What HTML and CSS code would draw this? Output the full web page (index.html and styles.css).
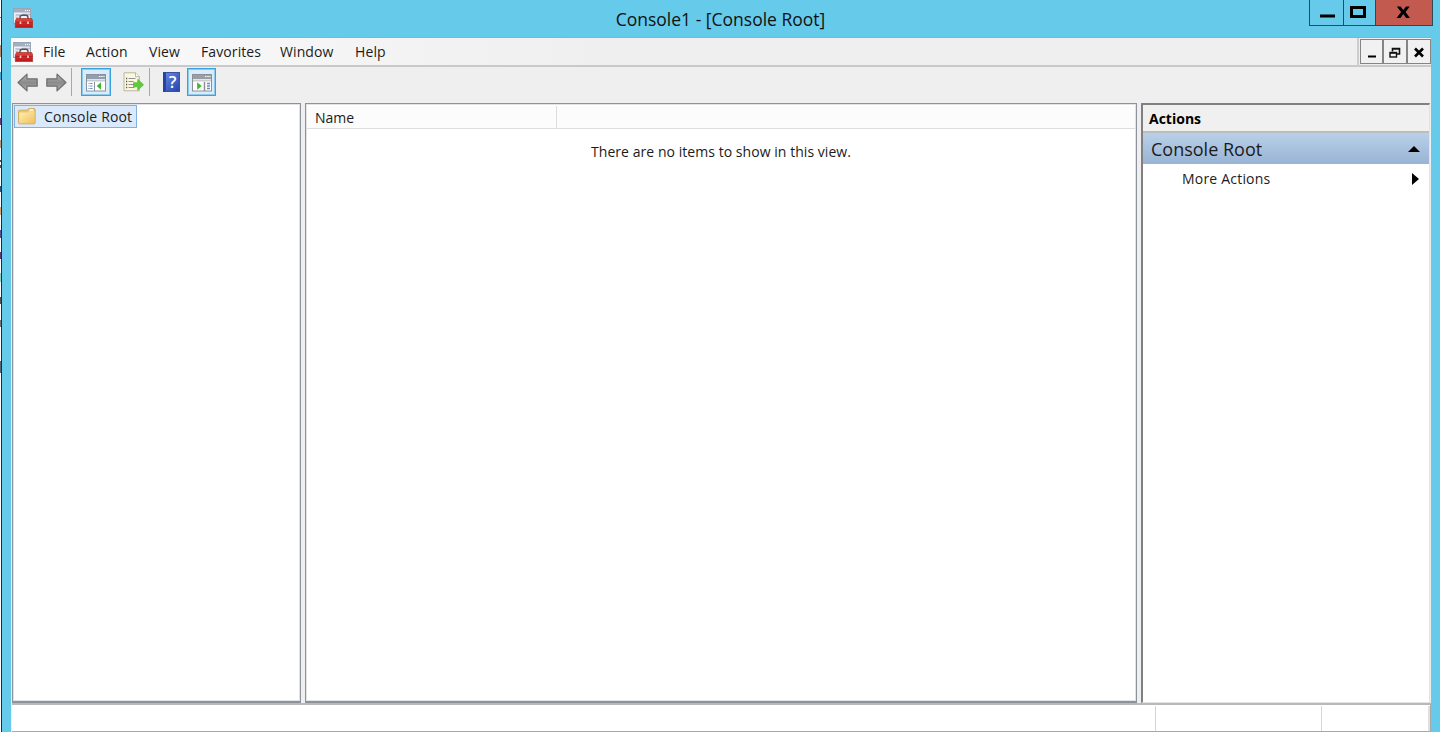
FILE: index.html
```html
<!DOCTYPE html>
<html lang="en">
<head>
    <meta charset="UTF-8">
    <meta name="viewport" content="width=device-width, initial-scale=1.0">
    <title>Console1 - [Console Root]</title>
    <link rel="stylesheet" href="styles.css">
</head>
<body>
    <svg class="defs" width="0" height="0">
        <defs>
            <linearGradient id="arrow-fill" x1="0" y1="0" x2="0" y2="1">
                <stop offset="0" stop-color="#b4b4b4"/>
                <stop offset="0.5" stop-color="#8b8b8b"/>
                <stop offset="1" stop-color="#a9a9a9"/>
            </linearGradient>
            <linearGradient id="red-fill" x1="0" y1="0" x2="0" y2="1">
                <stop offset="0" stop-color="#e0493f"/>
                <stop offset="1" stop-color="#bb1418"/>
            </linearGradient>
            <linearGradient id="folder-fill" x1="0" y1="0" x2="1" y2="1">
                <stop offset="0" stop-color="#fff0b4"/>
                <stop offset="1" stop-color="#efc15c"/>
            </linearGradient>
            <symbol id="toolbox" viewBox="0 0 20 20">
                <rect x="0.5" y="0.5" width="17" height="15" fill="#eef1f5" stroke="#9aa5b5"/>
                <rect x="1" y="1" width="16" height="3.5" fill="#a3afc0"/>
                <path d="M12 2.5h1M14 2.5h1M16 2.5h1" stroke="#fff"/>
                <path d="M2.5 7h5M2.5 9.5h3M9 6.5h8" stroke="#b1bac8" stroke-width="1.5"/>
                <path d="M7 11v-1.5q0-2.2 2-2.2h4q2 0 2 2.2V11" fill="none" stroke="#555" stroke-width="1.4"/>
                <path d="M3.5 10.5h15.2l1 2.5v6.5H2.3V13z" fill="url(#red-fill)" stroke="#a5201e" stroke-width="0.6"/>
                <path d="M2.5 14.5h17" stroke="#b01818" stroke-width="0.7"/>
                <path d="M7.5 13.5v2.6M15 13.5v2.6" stroke="#e8d4d2" stroke-width="1.6"/>
            </symbol>
            <symbol id="arrow" viewBox="0 0 20 18">
                <path d="M1 9L9.500 1v4.500h9.700v7H9.500V17z" fill="url(#arrow-fill)" stroke="#707070" stroke-width="1.200" stroke-linejoin="round"/>
            </symbol>
        </defs>
    </svg>

    <div class="screen">
        <div class="behind"></div>
        <div class="window">
            <header class="titlebar">
                <svg class="app-icon" width="20" height="20"><use href="#toolbox"/></svg>
                <h1 class="title">Console1 - [Console Root]</h1>
                <div class="caption-buttons">
                    <button class="caption-btn minimize"><svg width="33" height="25"><path d="M10 16h15" stroke="#000" stroke-width="3"/></svg></button>
                    <button class="caption-btn maximize"><svg width="31" height="25"><rect x="7.500" y="7.500" width="13" height="9" fill="none" stroke="#000" stroke-width="3"/></svg></button>
                    <button class="caption-btn close"><svg width="56" height="25"><path d="M20.800 6.500h3.800l2.700 3.600 2.700-3.600h3.800l-4.300 5.500 4.500 6h-3.900L27.300 14.100 24.500 18h-3.900l4.500-6z"/></svg></button>
                </div>
            </header>

            <div class="client">
                <nav class="menubar">
                    <svg class="menu-icon" width="20" height="20"><use href="#toolbox"/></svg>
                    <ul class="menu">
                        <li class="m-file">File</li>
                        <li class="m-action">Action</li>
                        <li class="m-view">View</li>
                        <li class="m-favorites">Favorites</li>
                        <li class="m-window">Window</li>
                        <li class="m-help">Help</li>
                    </ul>
                    <div class="mdi-buttons">
                        <button class="mdi-btn"><svg width="22" height="22"><path d="M7 15.500h8" stroke="#000" stroke-width="2"/></svg></button>
                        <button class="mdi-btn"><svg width="22" height="22"><path d="M8.500 10.500V7.500h7v5.500h-2.500M8.500 8h7M6 12h7" fill="none" stroke="#111" stroke-width="1.600"/><rect x="6" y="11.500" width="6.500" height="4.500" fill="none" stroke="#111" stroke-width="1.400"/></svg></button>
                        <button class="mdi-btn"><svg width="22" height="22"><path d="M7 7.500l8 8M15 7.500l-8 8" stroke="#000" stroke-width="2.600"/></svg></button>
                    </div>
                </nav>

                <div class="toolbar">
                    <svg class="tool-arrow" width="21" height="19"><use href="#arrow"/></svg>
                    <svg class="tool-arrow forward" width="21" height="19"><use href="#arrow"/></svg>
                    <span class="separator"></span>
                    <button class="tool-btn active">
                        <svg width="20" height="18" viewBox="0 0 20 18">
                            <rect x="0.500" y="0.500" width="19" height="16.500" fill="#fff" stroke="#8792a2"/>
                            <rect x="1" y="1" width="18" height="4" fill="#929dae"/>
                            <path d="M13 2.500h1.500M15.300 2.500h1.500M17.500 2.500h1" stroke="#fff"/>
                            <path d="M1 6.500h18" stroke="#c3cad4" stroke-width="2"/>
                            <path d="M8.500 8v9" stroke="#8792a2"/>
                            <path d="M2.500 9.500h4M2.500 12h4M2.500 14.500h4" stroke="#628bc4" stroke-width="1.200" stroke-dasharray="1 .7 3"/>
                            <path d="M15 8.200v7.500L10.700 12z" fill="#3fb52c"/>
                        </svg>
                    </button>
                    <svg class="tool-export" width="22" height="20" viewBox="0 0 22 20">
                        <path d="M1 .8h11.500l3.800 3.700v14.300H1z" fill="#fbf8dc" stroke="#b9b69e"/>
                        <path d="M12.500.8v3.900h3.800" fill="#fff" stroke="#aaa78f" stroke-width=".8"/>
                        <path d="M3 6.500h1.200M3 9.500h1.200M3 12.500h1.200M3 15.500h1.200" stroke="#555" stroke-width="1.400"/>
                        <path d="M5.500 6.500h7M5.500 9.500h5M5.500 12.500h5M5.500 15.500h6" stroke="#9090a0"/>
                        <path d="M10.500 10.700h4.300V7.300l5.700 5.500-5.700 5.400v-3.400h-4.300z" fill="#5dcc38" stroke="#55ba3a" stroke-width=".8"/>
                    </svg>
                    <span class="separator second"></span>
                    <div class="tool-help">?</div>
                    <button class="tool-btn active actions-toggle">
                        <svg width="20" height="18" viewBox="0 0 20 18">
                            <rect x="0.500" y="0.500" width="19" height="16.500" fill="#fff" stroke="#8b8f96"/>
                            <rect x="1" y="1" width="18" height="4" fill="#999da5"/>
                            <path d="M13 2.500h1.500M15.300 2.500h1.500M17.500 2.500h1" stroke="#fff"/>
                            <path d="M1 6.500h18" stroke="#c9ccd1" stroke-width="2"/>
                            <path d="M12.500 8v9" stroke="#8b8f96" stroke-width="1.500"/>
                            <path d="M15 9.500h3M15 12h3M15 14.500h3" stroke="#628bc4" stroke-width="1.300"/>
                            <path d="M5.200 8.200v7.500L9.700 12z" fill="#3fb52c"/>
                        </svg>
                    </button>
                </div>

                <main class="panes">
                    <aside class="tree">
                        <div class="tree-item">
                            <svg width="18" height="17" viewBox="0 0 18 17">
                                <path d="M.6 3.200q0-1 1-1h7.600l1.400-1.600h5.500q1 0 1 1v13.200q0 1-1 1H1.600q-1 0-1-1z" fill="#eac66c" stroke="#d3aa58"/>
                                <path d="M11.500 2h4" stroke="#fff" stroke-width="1.500"/>
                                <path d="M1.200 4.500h8.300l1.500-1.200h5.500v12H1.200z" fill="url(#folder-fill)"/>
                            </svg>
                            <span class="tree-label">Console Root</span>
                        </div>
                    </aside>
                    <section class="list">
                        <div class="list-header"><span class="column"><span>Name</span></span></div>
                        <p class="empty"><span>There are no items to show in this view.</span></p>
                    </section>
                    <aside class="actions">
                        <h2 class="actions-title"><span>Actions</span></h2>
                        <div class="actions-group">
                            <span class="group-label">Console Root</span>
                            <svg width="12" height="6"><path d="M0 6L6 0l6 6z"/></svg>
                        </div>
                        <div class="action-row">
                            <span>More Actions</span>
                            <svg width="7" height="12"><path d="M0 0l7 6-7 6z"/></svg>
                        </div>
                    </aside>
                </main>

                <footer class="statusbar">
                    <span class="status-main"></span>
                    <span class="status-mid"></span>
                    <span class="status-end"></span>
                </footer>
            </div>
        </div>
    </div>
</body>
</html>
```
FILE: styles.css
```css
:root {
    --frame: #66caea;
    --face: #efefef;
    --pane-border: #8d929c;
    --close: #c35a50;
}
* {
    box-sizing: border-box;
}
body {
    margin: 0;
    height: 732px;
    overflow: hidden;
    font-family: "Open Sans", "Noto Sans", sans-serif;
    font-size: 14px;
    color: #1b1b1b;
}
h1, h2, p, ul {
    margin: 0;
    padding: 0;
    font-weight: 400;
}
svg {
    display: block;
    flex: none;
}
button {
    padding: 0;
    border: 0;
    background: none;
    flex: none;
}
.defs {
    position: absolute;
}
.screen {
    display: flex;
    height: 732px;
}
.behind {
    width: 1px;
    background: linear-gradient(#fff 17px, #777 17px 18px, #fff 18px 45px, #b78b6e 45px 57px, #fff 57px 72px, #46a8d0 72px 80px, #fff 80px 118px, #66407d 118px 125px, #fff 125px 140px, #c59a78 140px 148px, #fff 148px 160px, #555 160px 162px, #fff 162px 165px, #555 165px 168px, #fff 168px 186px, #357 186px 192px, #fff 192px 207px, #dba978 207px 215px, #fff 215px 230px, #565294 230px 238px, #fff 238px 252px, #643574 252px 259px, #fff 259px 273px, #8ad3cd 273px 282px, #fff 282px 297px, #555 297px 304px, #fff 304px 320px, #777 320px 327px, #fff 327px 361px, #567 361px 373px, #fff 373px);
}
.window {
    flex: 1;
    display: flex;
    flex-direction: column;
    border-left: 1px solid #16303a;
    background: var(--frame);
}

/* title bar */
.titlebar {
    display: flex;
    height: 37px;
    padding: 0 7px 0 11px;
}
.app-icon {
    margin-top: 8px;
}
.title {
    flex: 1;
    padding-left: 99px;
    font-size: 17.5px;
    line-height: 39px;
    text-align: center;
    color: #111;
}
.caption-buttons {
    display: flex;
    height: 26px;
    border: 1px solid #274b57;
    border-top: 0;
}
.caption-btn + .caption-btn {
    border-left: 1px solid #274b57;
}
.close {
    background: var(--close);
}

/* menu */
.client {
    flex: 1;
    display: flex;
    flex-direction: column;
    margin: 0 9px;
    background: var(--face);
}
.menubar {
    display: flex;
    height: 30px;
    border-top: 1px solid #8cb2c0;
    border-bottom: 2px solid #c9c9cb;
    background: linear-gradient(90deg, #fbfbfb, #efefef 600px);
}
.menu-icon {
    margin: 4px 0 0 2px;
}
.menu {
    flex: 1;
    display: flex;
    padding-left: 10px;
    list-style: none;
    line-height: 27px;
}
.menu li {
    white-space: nowrap;
    letter-spacing: 0.1px;
}
.m-file { width: 43px; }
.m-action { width: 63px; }
.m-view { width: 52px; }
.m-favorites { width: 79px; }
.m-window { width: 75px; }
.mdi-buttons {
    display: flex;
    height: 28px;
    padding: 1px 0 2px 1px;
    border-left: 2px solid #cdcdcd;
}
.mdi-btn {
    border: 1px solid #858585;
    background: #f1f1f1;
}
.mdi-btn:first-child svg {
    width: 21px;
}

/* toolbar */
.toolbar {
    display: flex;
    height: 36px;
    padding: 1px 0 0 6px;
}
.tool-arrow {
    margin-top: 5px;
}
.forward {
    margin-left: 8px;
    transform: scaleX(-1);
}
.separator {
    width: 1px;
    height: 28px;
    margin: 0 9px 0 4px;
    background: #a8a8a8;
}
.tool-btn {
    display: flex;
    justify-content: center;
    align-items: center;
    width: 30px;
    height: 28px;
}
.tool-btn svg {
    margin-top: 2px;
}
.active {
    border: 1px solid #36a3df;
    background: #dcebfa;
    box-shadow: inset 0 0 0 1px #8bcbee;
}
.actions-toggle {
    width: 29px;
}
.tool-export {
    margin: 4px 0 0 12px;
}
.second {
    margin: 0 13px 0 4px;
}
.tool-help {
    width: 17px;
    height: 20px;
    margin: 4px 7px 0 0;
    border: 1px solid #3b51a0;
    border-left: 3px solid #2743a0;
    background: linear-gradient(135deg, #6385df, #2444ac);
    color: #fff;
    font-size: 17px;
    font-weight: 600;
    line-height: 18px;
    text-align: center;
}

/* panes */
.panes {
    display: flex;
    height: 600px;
    padding-left: 1px;
}
.tree,
.list {
    border: 1px solid var(--pane-border);
    border-bottom-width: 2px;
    background: #fff;
    box-shadow: inset 0 0 0 1px #e1e3e7;
}
.tree {
    width: 289px;
    margin-right: 4px;
    padding: 1px;
}
.tree-item {
    display: flex;
    align-items: center;
    width: 123px;
    height: 23px;
    padding-left: 3px;
    border: 1px solid #80b1e6;
    background: #dbe9fc;
}
.tree-label {
    margin-left: 8px;
    line-height: 20px;
    white-space: nowrap;
    letter-spacing: 0.15px;
}
.list {
    width: 832px;
    margin-right: 4px;
    padding: 2px 1px;
}
.list-header {
    display: flex;
    height: 23px;
    border-bottom: 1px solid #dedede;
    background: #fcfcfc;
}
.column {
    width: 250px;
    padding-left: 8px;
    border-right: 1px solid #dedede;
    line-height: 24px;
}
.empty {
    padding-top: 13px;
    line-height: 20px;
    text-align: center;
    letter-spacing: 0.05px;
}
.actions {
    flex: 1;
    margin-right: 1px;
    border: 1px solid #e3e3e3;
    border-top: 2px solid #808080;
    border-left: 2px solid #808080;
    background: #fff;
}
.actions-title {
    height: 28px;
    padding-left: 6px;
    border-bottom: 2px solid #bdbdbd;
    background: #f0f0f0;
    font-size: 14px;
    font-weight: 700;
    line-height: 28px;
    color: #000;
}
.actions-group {
    display: flex;
    align-items: center;
    justify-content: space-between;
    height: 31px;
    padding: 0 9px 0 8px;
    background: linear-gradient(#b9d0e9, #98b3d4);
}
.group-label {
    padding-top: 1px;
    font-size: 18px;
}
.action-row {
    display: flex;
    align-items: center;
    justify-content: space-between;
    height: 29px;
    padding: 0 10px 0 39px;
    letter-spacing: 0.2px;
}

/* status bar */
.statusbar {
    display: flex;
    height: 29px;
    margin-left: 1px;
    border-top: 2px solid #b9b9b9;
    border-right: 1px solid #a8a8a8;
    border-bottom: 1px solid #a8a8a8;
    background: #fff;
}
.status-main {
    flex: 1;
}
.status-mid {
    width: 166px;
    margin-top: 1px;
    border-left: 1px solid #d5d5d5;
}
.status-end {
    width: 109px;
    margin-top: 1px;
    border-left: 1px solid #d5d5d5;
    border-right: 2px solid #e0e0e0;
}
```
